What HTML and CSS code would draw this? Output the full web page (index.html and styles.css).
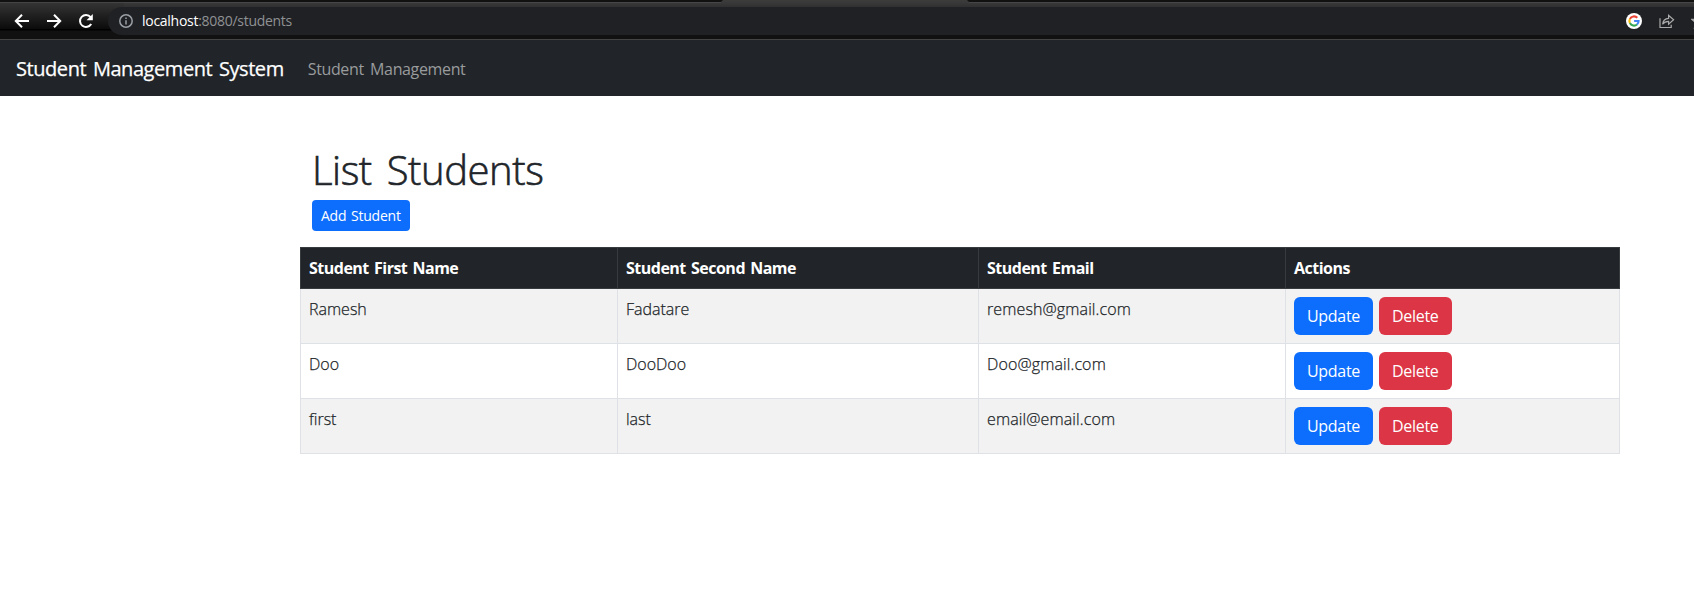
FILE: index.html
```html
<!DOCTYPE html>
<html lang="en">
<head>
<meta charset="utf-8">
<title>Student Management System</title>
<link rel="stylesheet" href="styles.css">
</head>
<body>
<div class="toolbar">
  <div class="active-tab"></div>
  <div class="controls">
    <svg width="16" height="16" viewBox="0 0 16 16"><path d="M15 8H2.5M8 1.8 1.8 8 8 14.2" /></svg>
    <svg width="16" height="16" viewBox="0 0 16 16"><path d="M1 8h12.5M8 1.8 14.2 8 8 14.2" /></svg>
    <svg width="16" height="16" viewBox="0 0 16 16"><path d="M13.2 11A6 6 0 1 1 12.6 4.1"/><path class="solid" d="M14.8 1v6.3H8.5z"/></svg>
  </div>
  <div class="omnibox">
    <svg class="info" width="14" height="14" viewBox="0 0 14 14"><circle cx="7" cy="7" r="6.2"/><path d="M7 6.2v4.3M7 3.4v1.6"/></svg>
    <span class="url"><span class="host">localhost</span>:8080/students</span>
    <svg class="google" width="16" height="16" viewBox="0 0 16 16"><circle cx="8" cy="8" r="8" fill="#fff"/><g fill="none" stroke-width="2.1"><path stroke="#ea4335" d="M3.9 5.9A4.6 4.6 0 0 1 11.3 4.8"/><path stroke="#fbbc05" d="M3.9 5.9a4.6 4.6 0 0 0 0 4.2"/><path stroke="#34a853" d="M3.9 10.1a4.6 4.6 0 0 0 7.1 1.4"/><path stroke="#4285f4" d="M11 11.5A4.6 4.6 0 0 0 12.6 8H8.1"/></g></svg>
    <svg class="share" width="16" height="15" viewBox="0 0 16 15"><path d="M1 4.2V13.5H12.2V10.8M3.6 10.2C4 6.6 6.2 4.5 9.6 4.3V1.4L14.6 5.8 9.6 10.1V7.3C7 7.3 5 8.2 3.6 10.2z"/></svg>
    <svg class="star" width="16" height="16" viewBox="0 0 16 16"><path d="M8 1.2 10 6l5.2.4-4 3.3 1.3 5L8 12l-4.500 2.700 1.300-5-4-3.300L6 6z"/></svg>
  </div>
</div>
<nav class="navbar">
  <a class="brand">Student Management System</a>
  <a class="nav-link">Student Management</a>
</nav>
<main class="container">
  <div class="heading">
    <h1>List Students</h1>
    <a class="btn btn-sm primary">Add Student</a>
  </div>
  <table class="students">
    <colgroup><col class="c1"><col class="c2"><col class="c3"><col class="c4"></colgroup>
    <thead><tr><th>Student First Name</th><th>Student Second Name</th><th>Student Email</th><th>Actions</th></tr></thead>
    <tbody>
      <tr><td>Ramesh</td><td>Fadatare</td><td class="email">remesh@gmail.com</td><td><div class="actions"><a class="btn primary">Update</a><a class="btn danger">Delete</a></div></td></tr>
      <tr><td>Doo</td><td>DooDoo</td><td class="email">Doo@gmail.com</td><td><div class="actions"><a class="btn primary">Update</a><a class="btn danger">Delete</a></div></td></tr>
      <tr><td>first</td><td>last</td><td class="email">email@email.com</td><td><div class="actions"><a class="btn primary">Update</a><a class="btn danger">Delete</a></div></td></tr>
    </tbody>
  </table>
</main>
</body>
</html>
```
FILE: styles.css
```css
* { box-sizing: border-box; }
body {
  margin: 0;
  background: #fff;
  color: #212529;
  font: 300 16px/24px "Open Sans", "Noto Sans", sans-serif;
  overflow: hidden;
}
.toolbar {
  position: relative;
  display: flex;
  height: 40px;
  padding-top: 7px;
  border-bottom: 1px solid #444;
  background: linear-gradient(#111 0 2px, #454545 2px 3px, #343434 3px, #0b0b0b 29px, #000 29px 30px, #111 31px);
}
.active-tab {
  position: absolute;
  left: 721px;
  top: 0;
  width: 248px;
  height: 7px;
  background: linear-gradient(#3c3c3c, #333);
  clip-path: polygon(2px 0, 246px 0, 248px 2px, 248px 7px, 0 7px, 0 2px);
}
.toolbar::after {
  content: "";
  position: absolute;
  left: 124px;
  right: 0;
  top: 3px;
  height: 4px;
  background: linear-gradient(#383838, #303030);
}
.controls {
  display: flex;
  gap: 16px;
  width: 108px;
  padding: 6px 0 0 14px;
}
.controls svg { fill: none; stroke: #fff; stroke-width: 2; flex: none; }
.controls .solid { fill: #fff; stroke: none; }
.omnibox {
  flex: 1;
  display: flex;
  align-items: center;
  height: 28px;
  padding-left: 11px;
  border-radius: 14px 0 0 14px;
  background: #202124;
  overflow: hidden;
}
.omnibox svg { flex: none; }
.info { fill: none; stroke: #9aa0a6; stroke-width: 1.5; }
.url { flex: 1; margin-left: 9px; font-size: 14px; font-weight: 400; line-height: 20px; color: #8f9194; letter-spacing: -.28px; }
.host { color: #fff; }
.google { margin-right: 17px; }
.share, .star { fill: none; stroke: #aaa; stroke-width: 1.2; }
.share { margin-right: 16px; }
.star { margin-right: -13px; fill: #aaa; }
.navbar {
  display: flex;
  align-items: center;
  gap: 24px;
  height: 56px;
  padding: 0 16px;
  background: #212529;
}
.brand {
  padding-top: 2px;
  color: #fff;
  font-size: 20px;
  font-weight: 400;
  line-height: 30px;
  letter-spacing: -.44px;
  word-spacing: 2px;
  -webkit-text-stroke: .25px;
}
.nav-link { padding-top: 1px; color: #999b9d; font-weight: 400; letter-spacing: -.36px; word-spacing: 2.5px; }
.container { width: 1320px; margin: 0 0 0 300px; padding-top: 48px; }
.heading { padding-left: 12px; }
h1 {
  margin: 0 0 6px;
  padding-top: 2px;
  font-size: 40px;
  font-weight: 300;
  line-height: 48px;
  letter-spacing: -.45px;
  word-spacing: 5px;
  -webkit-text-stroke: .6px;
}
.btn {
  display: block;
  width: max-content;
  height: 38px;
  padding: 7px 13px;
  border-radius: 6px;
  color: #fff;
  font-weight: 400;
  letter-spacing: -.3px;
}
.btn-sm { height: 31px; padding: 5px 9px; border-radius: 4px; font-size: 14px; line-height: 21px; letter-spacing: -.25px; word-spacing: 1.5px; }
.primary { background: #0d6efd; }
.danger { background: #dc3545; }
.students {
  width: 1320px;
  margin-top: 16px;
  border-collapse: collapse;
  table-layout: fixed;
}
.c1 { width: 317px; }
.c2 { width: 361px; }
.c3 { width: 307px; }
th, td { padding: 8px; text-align: left; vertical-align: top; border: 1px solid #dee2e6; }
td { -webkit-text-stroke: .25px; }
td .btn { -webkit-text-stroke: 0; }
.email { letter-spacing: .12px; }
th { background: #212529; color: #fff; border-color: #373b3e; font-weight: 700; letter-spacing: -.5px; word-spacing: 1.5px; }
tbody tr:nth-child(odd) { background: #f2f2f2; }
.actions { display: flex; gap: 6px; }
```
